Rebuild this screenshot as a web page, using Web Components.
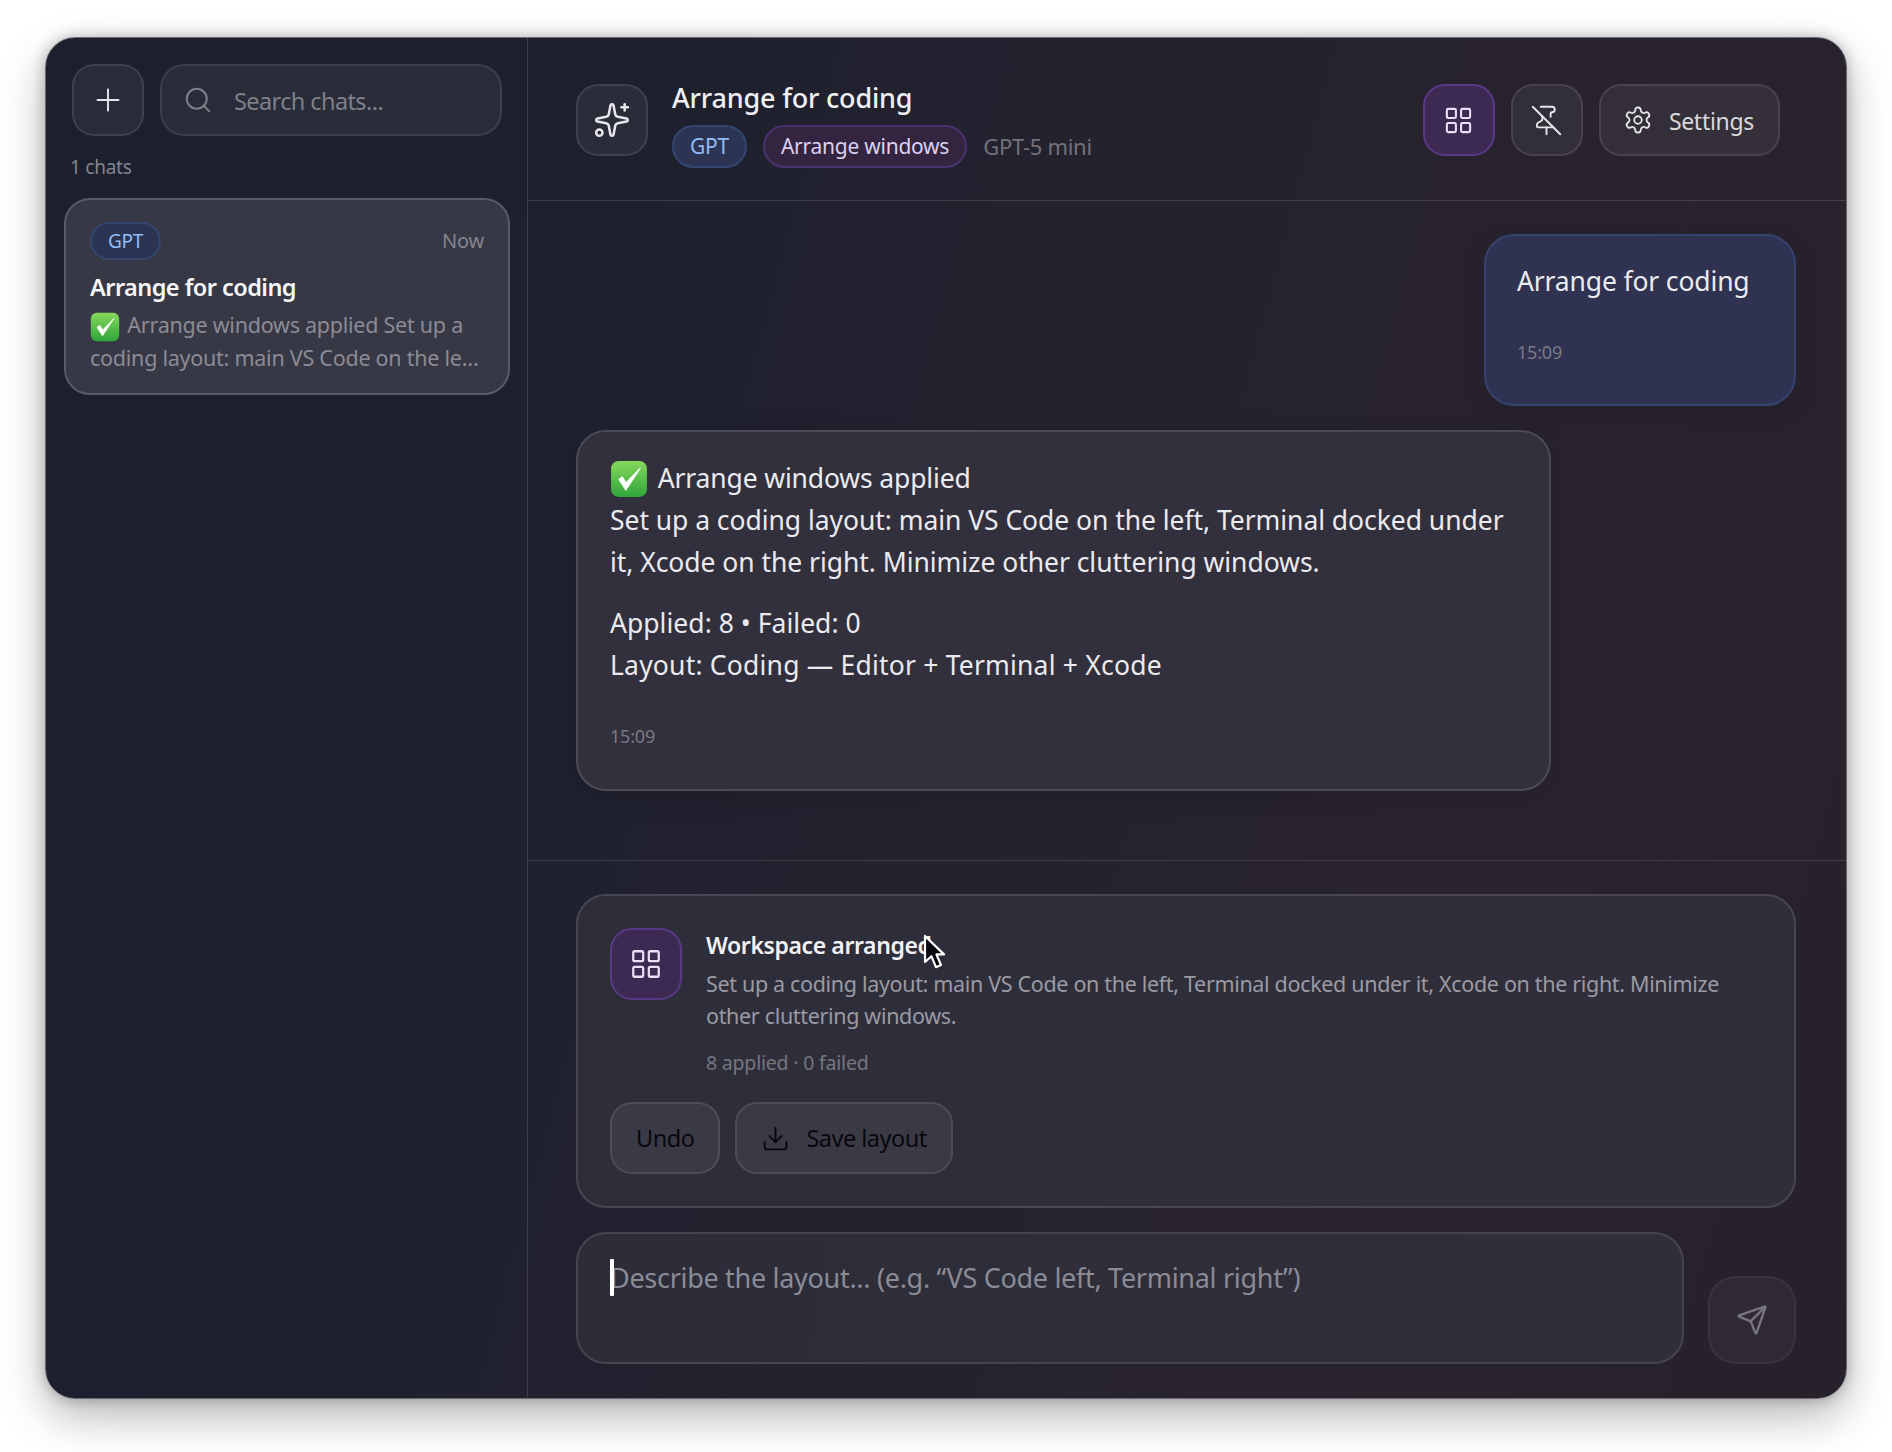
<!DOCTYPE html>
<html lang="en"><head><meta charset="utf-8"><title>Arrange for coding</title>
<style>
html,body{margin:0;background:#fff;height:100%}
body{font-family:"Noto Sans","Open Sans","Liberation Sans",sans-serif;overflow:hidden}
</style></head><body>
<x-app>
  <x-sidebar slot="side">
    <x-chat-item badge="GPT" time="Now" title="Arrange for coding">
      <x-check size="30" style="margin-right:2px"></x-check> Arrange windows applied Set up a coding layout: main VS Code on the left, Terminal docked under it
    </x-chat-item>
  </x-sidebar>
  <x-header slot="head" title="Arrange for coding"></x-header>
  <x-thread slot="thread">
    <x-bubble kind="user" time="15:09" style="letter-spacing:-.15px">Arrange for coding</x-bubble>
    <x-bubble kind="bot" time="15:09">
      <div style="letter-spacing:-.15px"><x-check size="38" style="margin-right:3px;margin-top:-4px"></x-check> Arrange windows applied</div>
      <div style="letter-spacing:-.05px">Set up a coding layout: main VS Code on the left, Terminal docked under it, Xcode on the right. Minimize other cluttering windows.</div>
      <div class="gap" style="letter-spacing:.03px">Applied: 8 • Failed: 0</div>
      <div style="letter-spacing:.2px">Layout: Coding — Editor + Terminal + Xcode</div>
    </x-bubble>
  </x-thread>
  <x-result slot="result" title="Workspace arranged" stats="8 applied · 0 failed">Set up a coding layout: main VS Code on the left, Terminal docked under it, Xcode on the right. Minimize other cluttering windows.</x-result>
  <x-composer slot="composer" placeholder="Describe the layout... (e.g. “VS Code left, Terminal right”)"></x-composer>
</x-app>
<script>
const ICONS={
plus:'<path d="M5 12h14"/><path d="M12 5v14"/>',
search:'<circle cx="11" cy="11" r="8"/><path d="m21 21-4.3-4.3"/>',
sparkles:'<path d="M11.017 2.814a1 1 0 0 1 1.966 0l1.051 5.558a2 2 0 0 0 1.594 1.594l5.558 1.051a1 1 0 0 1 0 1.966l-5.558 1.051a2 2 0 0 0-1.594 1.594l-1.051 5.558a1 1 0 0 1-1.966 0l-1.051-5.558a2 2 0 0 0-1.594-1.594l-5.558-1.051a1 1 0 0 1 0-1.966l5.558-1.051a2 2 0 0 0 1.594-1.594z"/><path d="M20 2v4"/><path d="M22 4h-4"/><circle cx="4" cy="20" r="2"/>',
grid:'<rect width="7" height="7" x="3" y="3" rx="1"/><rect width="7" height="7" x="14" y="3" rx="1"/><rect width="7" height="7" x="14" y="14" rx="1"/><rect width="7" height="7" x="3" y="14" rx="1"/>',
pinoff:'<path d="M12 17v5"/><path d="M15 9.34V7a1 1 0 0 1 1-1 2 2 0 0 0 0-4H7.89"/><path d="m2 2 20 20"/><path d="M9 9v1.76a2 2 0 0 1-1.11 1.79l-1.78.9A2 2 0 0 0 5 15.24V16a1 1 0 0 0 1 1h11"/>',
settings:'<path d="M12.22 2h-.44a2 2 0 0 0-2 2v.18a2 2 0 0 1-1 1.73l-.43.25a2 2 0 0 1-2 0l-.15-.08a2 2 0 0 0-2.73.73l-.22.38a2 2 0 0 0 .73 2.73l.15.1a2 2 0 0 1 1 1.72v.51a2 2 0 0 1-1 1.74l-.15.09a2 2 0 0 0-.73 2.73l.22.38a2 2 0 0 0 2.73.73l.15-.08a2 2 0 0 1 2 0l.43.25a2 2 0 0 1 1 1.73V20a2 2 0 0 0 2 2h.44a2 2 0 0 0 2-2v-.18a2 2 0 0 1 1-1.73l.43-.25a2 2 0 0 1 2 0l.15.08a2 2 0 0 0 2.73-.73l.22-.39a2 2 0 0 0-.73-2.73l-.15-.08a2 2 0 0 1-1-1.74v-.5a2 2 0 0 1 1-1.74l.15-.09a2 2 0 0 0 .73-2.73l-.22-.38a2 2 0 0 0-2.73-.73l-.15.08a2 2 0 0 1-2 0l-.43-.25a2 2 0 0 1-1-1.73V4a2 2 0 0 0-2-2z"/><circle cx="12" cy="12" r="3"/>',
download:'<path d="M12 15V3"/><path d="M21 15v4a2 2 0 0 1-2 2H5a2 2 0 0 1-2-2v-4"/><path d="m7 10 5 5 5-5"/>',
send:'<path d="M14.536 21.686a.5.5 0 0 0 .937-.024l6.5-19a.496.496 0 0 0-.635-.635l-19 6.5a.5.5 0 0 0-.024.937l7.93 3.18a2 2 0 0 1 1.112 1.11z"/><path d="m21.854 2.147-10.94 10.939"/>'
};
function def(name,css,html){
  customElements.define(name,class extends HTMLElement{
    connectedCallback(){
      if(this.shadowRoot)return;
      const r=this.attachShadow({mode:'open'});
      const a=n=>this.getAttribute(n)||'';
      r.innerHTML='<style>'+css+'</style>'+(typeof html==='function'?html(a):html);
    }
  });
}
def('x-icon',':host{display:inline-flex;flex:none}svg{display:block;fill:none;stroke:currentColor;stroke-linecap:round;stroke-linejoin:round}',
 a=>`<svg xmlns="http://www.w3.org/2000/svg" viewBox="0 0 24 24" width="${a('size')||24}" height="${a('size')||24}" stroke-width="${a('sw')||2}">${ICONS[a('name')]}</svg>`);
def('x-check',':host{display:inline-block;vertical-align:middle;line-height:0}svg{display:block}',
 a=>{const s=a('size')||28;return `<svg xmlns="http://www.w3.org/2000/svg" viewBox="0 0 36 36" width="${s}" height="${s}" role="img" aria-label="✅"><defs><linearGradient id="g" x1="0" y1="0" x2="0" y2="1"><stop offset="0" stop-color="#86d85c"/><stop offset="1" stop-color="#2fa63a"/></linearGradient></defs><rect x="1" y="1" width="34" height="34" rx="7" fill="url(#g)"/><path d="M8.5 18.5 15 28.5 28.5 8 15.3 21.5 11.5 16z" fill="#fff" stroke="#fff" stroke-width="1" stroke-linejoin="round"/></svg>`});
def('x-pill',`:host{display:inline-flex;align-items:center;justify-content:center;box-sizing:border-box;height:var(--h,43px);padding:0 var(--px,16px);border-radius:999px;border:2px solid;font-size:var(--fs,21px);line-height:1;white-space:nowrap;letter-spacing:-.25px}
:host([tone=blue]){background:#2b3452;border-color:#33466f;color:#93bdf5}
:host([tone=purple]){background:#33253f;border-color:#4a3170;color:#dcd0f4}`,'<slot></slot>');
def('x-tile',`:host{display:inline-flex;align-items:center;justify-content:center;gap:16px;box-sizing:border-box;height:72px;min-width:72px;border-radius:22px;border:2px solid rgba(255,255,255,.1);background:rgba(255,255,255,.055);color:#e6e5ea;flex:none}
:host([tone=purple]){background:#3c2a52;border-color:#5a3a88;color:#eadff8}
:host([wide]){padding:0 24px 0 22px}
:host([dark]){color:#08080c;background:rgba(255,255,255,.06);padding:0 24px}
:host([dim]){color:#77757f;background:rgba(255,255,255,.04);border-color:rgba(255,255,255,.05);height:88px;width:88px;border-radius:28px}
::slotted(*){flex:none}`,'<slot></slot>');
def('x-app',`:host{display:flex;box-sizing:border-box;width:1802px;height:1362px;margin:37px 0 0 45px;border:1px solid #6b6a74;border-radius:30px;overflow:hidden;color:#eee;background:linear-gradient(105deg,#1c1f2e 0%,#1e202e 28%,#24222f 50%,#29232e 78%,#27212c 100%);box-shadow:0 18px 44px rgba(0,0,0,.28),0 0 14px rgba(0,0,0,.25)}
.side{width:481px;flex:none;border-right:1.5px solid rgba(255,255,255,.14);display:flex;flex-direction:column}
.main{flex:1;min-width:0;display:flex;flex-direction:column}
.bottom{border-top:1.5px solid rgba(255,255,255,.12);padding:33px 50px 34px 48px;display:flex;flex-direction:column;gap:24px}`,
`<div class="side"><slot name="side"></slot></div><div class="main"><slot name="head"></slot><slot name="thread"></slot><div class="bottom"><slot name="result"></slot><slot name="composer"></slot></div></div>`);
def('x-sidebar',`:host{display:flex;flex-direction:column;flex:1;padding:26px 17px 26px 18px}
.top{display:flex;gap:16px;padding:0 8px}
.search{flex:1;height:72px;box-sizing:border-box;border-radius:24px;border:2px solid rgba(255,255,255,.09);background:rgba(255,255,255,.055);display:flex;align-items:center;padding:0 21px;gap:21px;color:#807f88;font-size:23.5px;letter-spacing:-.6px}
.search span{position:relative;top:1px}
.count{color:#85848d;font-size:19px;margin:18px 0 17px 6px;line-height:27px;letter-spacing:-.25px}`,
`<div class="top"><x-tile><x-icon name="plus" size="36" sw="1.3"></x-icon></x-tile><div class="search"><x-icon name="search" size="30" sw="1.6"></x-icon><span>Search chats...</span></div></div>
<div class="count">1 chats</div><slot></slot>`);
def('x-chat-item',`:host{display:block;box-sizing:border-box;height:197px;padding:22px 24px;border-radius:26px;background:#373845;border:2px solid #5a5a66;flex:none}
.r{display:flex;justify-content:space-between;align-items:center}
.t{color:#85848f;font-size:20px;letter-spacing:-.2px;margin-top:-2px}
h3{margin:10px 0 0;font-size:23.5px;line-height:34px;font-weight:600;color:#f5f5f7;letter-spacing:-.55px}
.p{color:#8c8b95;font-size:21.5px;line-height:32px;margin-top:5px;letter-spacing:-.25px;height:64px;overflow:hidden;display:-webkit-box;-webkit-line-clamp:2;-webkit-box-orient:vertical}`,
a=>`<div class="r"><x-pill tone="blue" style="--h:38px;--fs:19px;--px:16px">${a('badge')}</x-pill><span class="t">${a('time')}</span></div><h3>${a('title')}</h3><div class="p"><slot></slot></div>`);
def('x-header',`:host{display:flex;box-sizing:border-box;height:163px;flex:none;padding:46px 66px 0 48px;border-bottom:1.5px solid rgba(255,255,255,.13);gap:24px}
.tx{flex:1;min-width:0}
h2{margin:0;font-size:27px;line-height:34px;font-weight:500;color:#f0eff2;letter-spacing:-.18px;margin-top:-3px}
.m{display:flex;align-items:center;gap:16px;margin-top:10px}
.mod{color:#72717a;font-size:22px;letter-spacing:-.3px;margin-top:-2px}
.acts{display:flex;gap:16px}
span.s{font-size:23px;color:#d9d8dd;letter-spacing:-.3px;position:relative;top:1px}`,
a=>`<x-tile><x-icon name="sparkles" size="38" sw="1.6"></x-icon></x-tile>
<div class="tx"><h2>${a('title')}</h2><div class="m"><x-pill tone="blue">GPT</x-pill><x-pill tone="purple">Arrange windows</x-pill><span class="mod">GPT-5 mini</span></div></div>
<div class="acts"><x-tile tone="purple"><x-icon name="grid" size="31" sw="1.6"></x-icon></x-tile><x-tile><x-icon name="pinoff" size="33" sw="1.4"></x-icon></x-tile><x-tile wide><x-icon name="settings" size="30" sw="1.45"></x-icon><span class="s">Settings</span></x-tile></div>`);
def('x-thread',`:host{display:flex;flex-direction:column;flex:1;padding:33px 50px 0 48px;gap:24px;min-height:0}`,'<slot></slot>');
def('x-bubble',`:host{display:block;box-sizing:border-box;border-radius:30px;padding:25px 32px 40px;font-size:26.5px;line-height:42px;color:#ebeaee;letter-spacing:-.35px;border:2px solid rgba(255,255,255,.12)}
:host([kind=user]){align-self:flex-end;background:#2f3250;border-color:#35446f;width:312px;padding:24px 31px 39px;box-shadow:0 6px 24px rgba(0,0,0,.15)}
:host([kind=bot]){align-self:flex-start;background:#32303d;border-color:#4b4a57;width:975px;box-shadow:0 6px 24px rgba(0,0,0,.12)}
.time{color:#7a7985;font-size:18px;line-height:27px;margin-top:36px;letter-spacing:-.2px;position:relative;top:1px}
::slotted(.gap){margin-top:19px}`,
a=>`<slot></slot><div class="time">${a('time')}</div>`);
def('x-result',`:host{display:block;box-sizing:border-box;height:314px;padding:32px;border-radius:30px;background:linear-gradient(100deg,#2d2e3a,#302e3a);border:2px solid #474653}
.r{display:flex;gap:24px}
h4{margin:0;font-size:23px;line-height:34px;font-weight:600;color:#f2f1f4;letter-spacing:-.4px}
.d{color:#9b9aa3;font-size:21.5px;line-height:32px;margin-top:6px;letter-spacing:-.33px;max-width:1030px}
.s{color:#77767f;font-size:19.5px;line-height:30px;margin-top:16px;letter-spacing:-.2px}
.b{display:flex;gap:15px;margin-top:24px;font-size:23.5px;letter-spacing:-.5px}
.hold{position:relative;display:inline-block}
.cur{position:absolute;left:216px;top:5px;width:24px;height:38px}`,
a=>`<div class="r"><x-tile tone="purple"><x-icon name="grid" size="34" sw="1.6"></x-icon></x-tile><div><div class="hold"><h4>${a('title')}</h4><svg class="cur" viewBox="0 0 24 38" xmlns="http://www.w3.org/2000/svg"><path d="M3 3v26l6.4-5.8 4.6 11 5-2.2-4.6-10.6H22z" fill="#0a0a0e" stroke="#fff" stroke-width="2.2" stroke-linejoin="round"/></svg></div><div class="d"><slot></slot></div><div class="s">${a('stats')}</div></div></div>
<div class="b"><x-tile wide dark>Undo</x-tile><x-tile wide dark><x-icon name="download" size="29" sw="1.6"></x-icon>Save layout</x-tile></div>`);
def('x-composer',`:host{display:flex;align-items:flex-end;gap:24px}
.in{flex:1;height:132px;box-sizing:border-box;border-radius:30px;border:2px solid #454552;background:linear-gradient(100deg,#2c2d39,#312e39);padding:23px 32px;position:relative;font-size:27px;line-height:42px;color:#8b8b96;letter-spacing:-.3px}
.caret{position:absolute;left:32px;top:25px;width:3.5px;height:37px;background:#fff;border-radius:1px}`,
a=>`<div class="in"><span>${a('placeholder')}</span><i class="caret"></i></div><x-tile dim><x-icon name="send" size="32" sw="1.8"></x-icon></x-tile>`);
</script>
</body></html>
